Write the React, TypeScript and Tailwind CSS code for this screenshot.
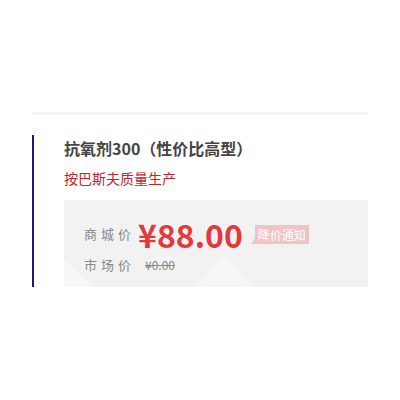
import React from 'react';

const App: React.FC = () => {
  return (
    <div className="w-[400px] h-[400px] bg-white pt-[112px] px-8 font-['Noto_Sans_CJK_SC',sans-serif]">
      <div className="h-[3px] bg-[#f4f4f4]" />
      <div className="mt-5 border-l-2 border-[#1a1a6e] pl-[30px]">
        <h1 className="text-[16px] font-bold text-[#444] leading-[26px]">抗氧剂300（性价比高型）</h1>
        <p className="mt-[7px] text-[14px] text-[#c0262d] leading-[20px]">按巴斯夫质量生产</p>
        <div className="relative mt-[12px] h-[87px] bg-[#f2f2f2] overflow-hidden">
          {/* faint decorative shapes */}
          <svg className="absolute left-0 top-0" width="304" height="87" viewBox="0 0 304 87">
            <polygon points="0,60 30,87 0,87" fill="#f7f7f7" />
            <polygon points="130,87 160,55 190,87" fill="#f6f6f6" />
          </svg>
          <div className="relative flex items-center pl-5 pt-[18px]">
            <span className="text-[13px] text-[#888] tracking-[4px] w-[54px]">商城价</span>
            <span className="text-[32px] font-bold text-[#e4393c] leading-[32px]">¥88.00</span>
            <span className="relative ml-3 bg-[#f0c4c4] text-white text-[12px] leading-[19px] px-[3px]">
              <span className="absolute -left-[4px] bottom-0 w-0 h-0 border-t-[6px] border-t-transparent border-r-[4px] border-r-[#f0c4c4]" />
              降价通知
            </span>
          </div>
          <div className="relative flex items-center pl-5 mt-[5px]">
            <span className="text-[13px] text-[#888] tracking-[4px] leading-[19px] w-[61px]">市场价</span>
            <span className="text-[12px] text-[#888] leading-[19px] line-through">¥0.00</span>
          </div>
        </div>
      </div>
    </div>
  );
};

export default App;
